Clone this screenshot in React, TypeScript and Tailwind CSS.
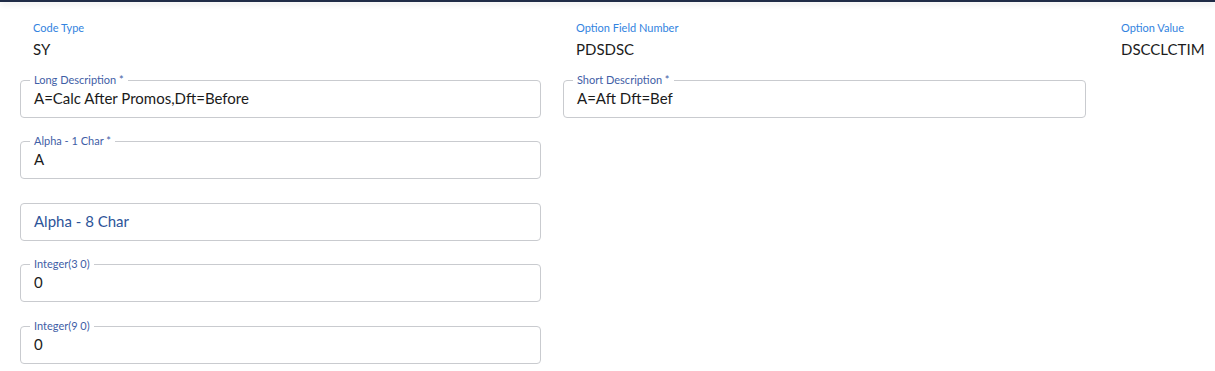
import React from "react";

const font = { fontFamily: "Lato, 'Open Sans', sans-serif" };

function Outlined({ label, value, className = "" }: { label: string; value: string; className?: string }) {
  return (
    <div className={`relative h-[38px] rounded-[4px] border border-[#c9cbcf] flex items-center pl-[13px] ${className}`}>
      <span className="absolute left-[9px] top-[-8px] bg-white px-[4px] text-[11px] leading-[14px] text-[#3f5ea6]">
        {label}
      </span>
      <span className="text-[15px] leading-[20px] text-[#1b1b1b] pb-[3px]">{value}</span>
    </div>
  );
}

function Display({ label, value }: { label: string; value: string }) {
  return (
    <div className="pl-[13px]">
      <div className="text-[11px] leading-[14px] text-[#3283e0]">{label}</div>
      <div className="mt-[4px] text-[15px] leading-[20px] text-[#1b1b1b]">{value}</div>
    </div>
  );
}

export default function App() {
  return (
    <div className="w-[1215px] h-[371px] bg-white overflow-hidden relative" style={font}>
      <div className="h-[2px] bg-[#1f2b46] shadow-[0_2px_6px_rgba(0,0,0,0.18)]" />
      <div className="pl-[20px] pt-[19px]">
        <div className="grid grid-cols-[521px_523px_1fr] gap-x-[22px]">
          <Display label="Code Type" value="SY" />
          <Display label="Option Field Number" value="PDSDSC" />
          <Display label="Option Value" value="DSCCLCTIM" />
        </div>
        <div className="mt-[21px] grid grid-cols-[521px_523px_1fr] gap-x-[22px]">
          <Outlined label="Long Description *" value="A=Calc After Promos,Dft=Before" />
          <Outlined label="Short Description *" value="A=Aft Dft=Bef" />
        </div>
        <div className="w-[521px]">
          <Outlined className="mt-[23px]" label="Alpha - 1 Char *" value="A" />
          <div className="mt-[24px] h-[38px] rounded-[4px] border border-[#c9cbcf] flex items-center pl-[13px]">
            <span className="text-[15px] leading-[20px] text-[#2d5499] pb-[3px]">Alpha - 8 Char</span>
          </div>
          <Outlined className="mt-[23px]" label="Integer(3 0)" value="0" />
          <Outlined className="mt-[24px]" label="Integer(9 0)" value="0" />
        </div>
      </div>
    </div>
  );
}
